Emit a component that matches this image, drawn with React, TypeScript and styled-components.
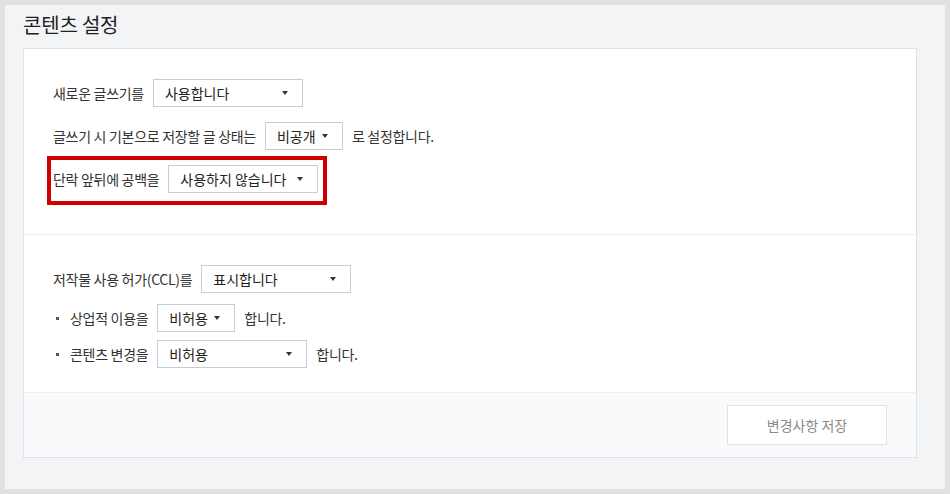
import styled, { createGlobalStyle } from "styled-components";

const GlobalStyle = createGlobalStyle`
  html, body {
    margin: 0;
    padding: 0;
    background: #e1e1e1;
  }
  body {
    font-family: "Noto Sans CJK KR", "Noto Sans", sans-serif;
    color: #333;
  }
  * {
    box-sizing: border-box;
  }
`;

interface SelectProps {
  value: string;
  width: number;
}

const Select = ({ value, width }: SelectProps) => (
  <SelectBox $width={width}>
    <span>{value}</span>
    <Caret />
  </SelectBox>
);

const App = () => {
  return (
    <>
      <GlobalStyle />
      <Page>
        <Title>콘텐츠 설정</Title>
        <Card>
          <Section>
            <Row>
              <Label>새로운 글쓰기를</Label>
              <Select value="사용합니다" width={150} />
            </Row>
            <Row>
              <Label>글쓰기 시 기본으로 저장할 글 상태는</Label>
              <Select value="비공개" width={78} />
              <Label>로 설정합니다.</Label>
            </Row>
            <Row $highlight>
              <Label>단락 앞뒤에 공백을</Label>
              <Select value="사용하지 않습니다" width={150} />
            </Row>
          </Section>
          <Section $bottom={24}>
            <Row>
              <Label>저작물 사용 허가(CCL)를</Label>
              <Select value="표시합니다" width={150} />
            </Row>
            <BulletList>
              <BulletItem>
                <Label>상업적 이용을</Label>
                <Select value="비허용" width={78} />
                <Label>합니다.</Label>
              </BulletItem>
              <BulletItem>
                <Label>콘텐츠 변경을</Label>
                <Select value="비허용" width={150} />
                <Label>합니다.</Label>
              </BulletItem>
            </BulletList>
          </Section>
          <Footer>
            <SaveButton type="button">변경사항 저장</SaveButton>
          </Footer>
        </Card>
      </Page>
    </>
  );
};

export default App;

const Page = styled.div`
  margin: 5px;
  height: 484px;
  background: #f3f4f6;
  padding: 0 28px 31px 18px;
  display: flex;
  flex-direction: column;
`;

const Title = styled.h1`
  margin: 0;
  height: 44px;
  padding-bottom: 5px;
  display: flex;
  align-items: center;
  font-size: 20px;
  font-weight: 400;
  color: #222;
  letter-spacing: -0.2px;
`;

const Card = styled.div`
  background: #fff;
  border: 1px solid #dfe2e7;
  display: flex;
  flex-direction: column;
`;

const Section = styled.div<{ $bottom?: number }>`
  display: flex;
  flex-direction: column;
  align-items: flex-start;
  gap: 15px;
  padding: 30px 29px ${({ $bottom }) => $bottom ?? 41}px;
  & + & {
    border-top: 1px solid #eceef1;
    gap: 11px;
  }
`;

const Row = styled.div<{ $highlight?: boolean }>`
  display: flex;
  align-items: center;
  gap: 9px;
  height: 28px;
  ${({ $highlight }) =>
    $highlight &&
    `
    box-sizing: content-box;
    border: 4px solid #d10000;
    padding: 5px 5px 8px 2px;
    margin: -9px 0 -12px -6px;
  `}
`;

const Label = styled.span`
  font-size: 14px;
  line-height: 20px;
  color: #333;
  letter-spacing: -0.3px;
  white-space: nowrap;
`;

const BulletList = styled.ul`
  list-style: none;
  margin: 0;
  padding: 0;
  display: flex;
  flex-direction: column;
  gap: 8px;
`;

const BulletItem = styled.li`
  display: flex;
  align-items: center;
  gap: 9px;
  height: 28px;
  padding-left: 17px;
  position: relative;
  &::before {
    content: "";
    position: absolute;
    left: 3px;
    top: 13px;
    width: 3px;
    height: 3px;
    background: #555;
  }
`;

const SelectBox = styled.div<{ $width: number }>`
  width: ${({ $width }) => $width}px;
  height: 28px;
  border: 1px solid #c9cdd3;
  background: #fff;
  display: flex;
  align-items: center;
  justify-content: space-between;
  padding: 0 14px 0 11px;
  font-size: 14px;
  color: #222;
  white-space: nowrap;
`;

const Caret = styled.i`
  width: 0;
  height: 0;
  border-left: 3.5px solid transparent;
  border-right: 3.5px solid transparent;
  border-top: 4px solid #333;
`;

const Footer = styled.div`
  background: #f9fafb;
  border-top: 1px solid #eceef1;
  display: flex;
  justify-content: flex-end;
  padding: 12px 29px 12px;
`;

const SaveButton = styled.button`
  width: 160px;
  height: 40px;
  background: #fff;
  border: 1px solid #dfe2e7;
  font-family: inherit;
  font-size: 14px;
  color: #8a8a8a;
  cursor: default;
`;
